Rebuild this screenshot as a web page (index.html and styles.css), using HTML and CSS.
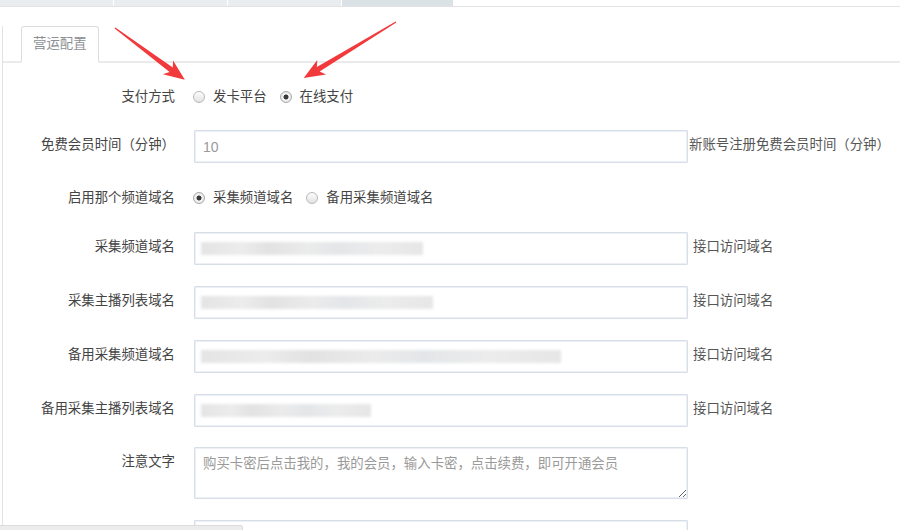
FILE: index.html
```html
<!DOCTYPE html>
<html>
<head>
  <title>营运配置</title>
  <link rel="stylesheet" href="styles.css">
</head>
<body>
  <div class="topbar">
    <span class="toptab"></span>
    <span class="toptab"></span>
    <span class="toptab"></span>
    <span class="toptab active"></span>
  </div>

  <div class="page">
    <div class="tabs">
      <span class="tab">营运配置</span>
    </div>

    <form class="form">
      <div class="row row-radio row-first">
        <label class="label">支付方式</label>
        <div class="radios">
          <span class="radio"></span><span class="radio-text">发卡平台</span>
          <span class="radio checked"></span><span class="radio-text">在线支付</span>
        </div>
      </div>

      <div class="row">
        <label class="label">免费会员时间（分钟）</label>
        <input class="input" type="text" placeholder="10">
        <span class="help help-near">新账号注册免费会员时间（分钟）</span>
      </div>

      <div class="row row-radio">
        <label class="label">启用那个频道域名</label>
        <div class="radios">
          <span class="radio checked"></span><span class="radio-text">采集频道域名</span>
          <span class="radio"></span><span class="radio-text">备用采集频道域名</span>
        </div>
      </div>

      <div class="row">
        <label class="label">采集频道域名</label>
        <div class="input"><span class="blur" style="width: 222px"></span></div>
        <span class="help">接口访问域名</span>
      </div>

      <div class="row">
        <label class="label">采集主播列表域名</label>
        <div class="input"><span class="blur" style="width: 232px"></span></div>
        <span class="help">接口访问域名</span>
      </div>

      <div class="row">
        <label class="label">备用采集频道域名</label>
        <div class="input"><span class="blur" style="width: 360px"></span></div>
        <span class="help">接口访问域名</span>
      </div>

      <div class="row row-tight">
        <label class="label">备用采集主播列表域名</label>
        <div class="input"><span class="blur" style="width: 170px"></span></div>
        <span class="help">接口访问域名</span>
      </div>

      <div class="row">
        <label class="label">注意文字</label>
        <textarea class="input textarea" placeholder="购买卡密后点击我的，我的会员，输入卡密，点击续费，即可开通会员"></textarea>
      </div>

      <div class="row">
        <label class="label"></label>
        <input class="input" type="text">
      </div>
    </form>
  </div>

  <!-- setas vermelhas da captura -->
  <svg class="arrows" width="900" height="530" viewBox="0 0 900 530">
    <g transform="translate(115 28) rotate(36.6)">
      <polygon points="0,-0.6 70,-2.7 66,-8.5 87,0 66,8.5 70,2.7 0,0.6" fill="#f23a3c"/>
    </g>
    <g transform="translate(396 22) rotate(148.7)">
      <polygon points="0,-0.6 91,-2.7 87,-8.5 108,0 87,8.5 91,2.7 0,0.6" fill="#f23a3c"/>
    </g>
  </svg>

  <div class="hscroll"></div>
</body>
</html>
```

FILE: styles.css
```css
html {
  overflow: hidden;
}

body {
  font-family: "Liberation Sans", "Noto Sans CJK SC", sans-serif;
  font-size: 13.4px;
  color: #444;
  background-color: #fff;
  margin: 0;
  padding: 0;
}

.topbar {
  display: flex;
  height: 6px;
  border-bottom: 1px solid #e3e3e3;
}

.toptab {
  width: 113px;
  border-right: 1px solid #fff;
  background-color: #e9edef;
}

.toptab.active {
  width: 111px;
  background-color: #dae2e5;
}

.page {
  margin-left: 2px;
  border-left: 1px solid #e2e2e2;
  min-height: 600px;
}

.tabs {
  display: flex;
  margin-top: 19px;
  padding-left: 18px;
  height: 35px;
  border-bottom: 2px solid #ebebeb;
}

.tab {
  height: 37px;
  box-sizing: border-box;
  padding: 0 11px;
  line-height: 34px;
  color: #8c9094;
  border: 1px solid #ddd;
  border-bottom: 2px solid #fff;
  border-radius: 3px 3px 0 0;
  background-color: #fff;
}

.form {
  padding-top: 20px;
}

.row {
  display: flex;
  align-items: flex-start;
  margin-bottom: 21px;
}

.row-first,
.row-tight {
  margin-bottom: 20px;
}

.row-radio {
  height: 27px;
  align-items: center;
}

.label {
  width: 172px;
  margin-right: 19px;
  text-align: right;
  line-height: 20px;
  padding-top: 5px;
  color: #444;
  flex-shrink: 0;
}

.row-radio .label {
  padding-top: 0;
}

.radios {
  display: flex;
  align-items: center;
  margin-left: -1px;
}

.radio {
  width: 12px;
  height: 12px;
  box-sizing: border-box;
  border-radius: 50%;
  border: 1px solid #b9b9b9;
  background: linear-gradient(#fdfdfd, #e2e2e2);
  margin-right: 8px;
}

.radio.checked {
  background: radial-gradient(circle, #3a3a3a 0 2.2px, #f4f4f4 2.8px, #dedede 100%);
  border-color: #a9a9a9;
}

.radio-text {
  line-height: 20px;
  margin-right: 13px;
}

.input {
  display: flex;
  align-items: center;
  width: 494px;
  height: 33px;
  box-sizing: border-box;
  padding: 0 8px;
  border: 1px solid #d6dee7;
  box-shadow: inset 0 0 0 1px #edf1f5;
  border-radius: 1px;
  background-color: #fff;
  font-family: "Liberation Sans", "Noto Sans CJK SC", sans-serif;
  font-size: 14px;
  color: #555;
  flex-shrink: 0;
  margin: 0;
}

.input::placeholder {
  color: #9a9a9a;
}

.textarea {
  display: block;
  height: 52px;
  padding: 6px 8px;
  font-size: 13.4px;
  line-height: 20px;
  resize: vertical;
}

.blur {
  display: block;
  height: 13px;
  background: linear-gradient(90deg, #e4e4e4 0%, #ececec 18%, #e2e2e2 30%, #ebebeb 48%, #e3e6e8 62%, #ececec 80%, #e6e6e6 100%);
  filter: blur(1.5px);
  margin-left: -2px;
}

.help {
  margin-left: 5px;
  line-height: 20px;
  padding-top: 5px;
  color: #555;
  white-space: nowrap;
}

.help-near {
  margin-left: 1px;
}

.arrows {
  position: absolute;
  top: 0;
  left: 0;
  pointer-events: none;
}

.hscroll {
  position: fixed;
  left: 0;
  bottom: 0;
  width: 242px;
  height: 4px;
  background-color: #ececec;
  border-top: 1px solid #dcdcdc;
  border-right: 1px solid #dcdcdc;
  border-radius: 0 3px 0 0;
}
```
